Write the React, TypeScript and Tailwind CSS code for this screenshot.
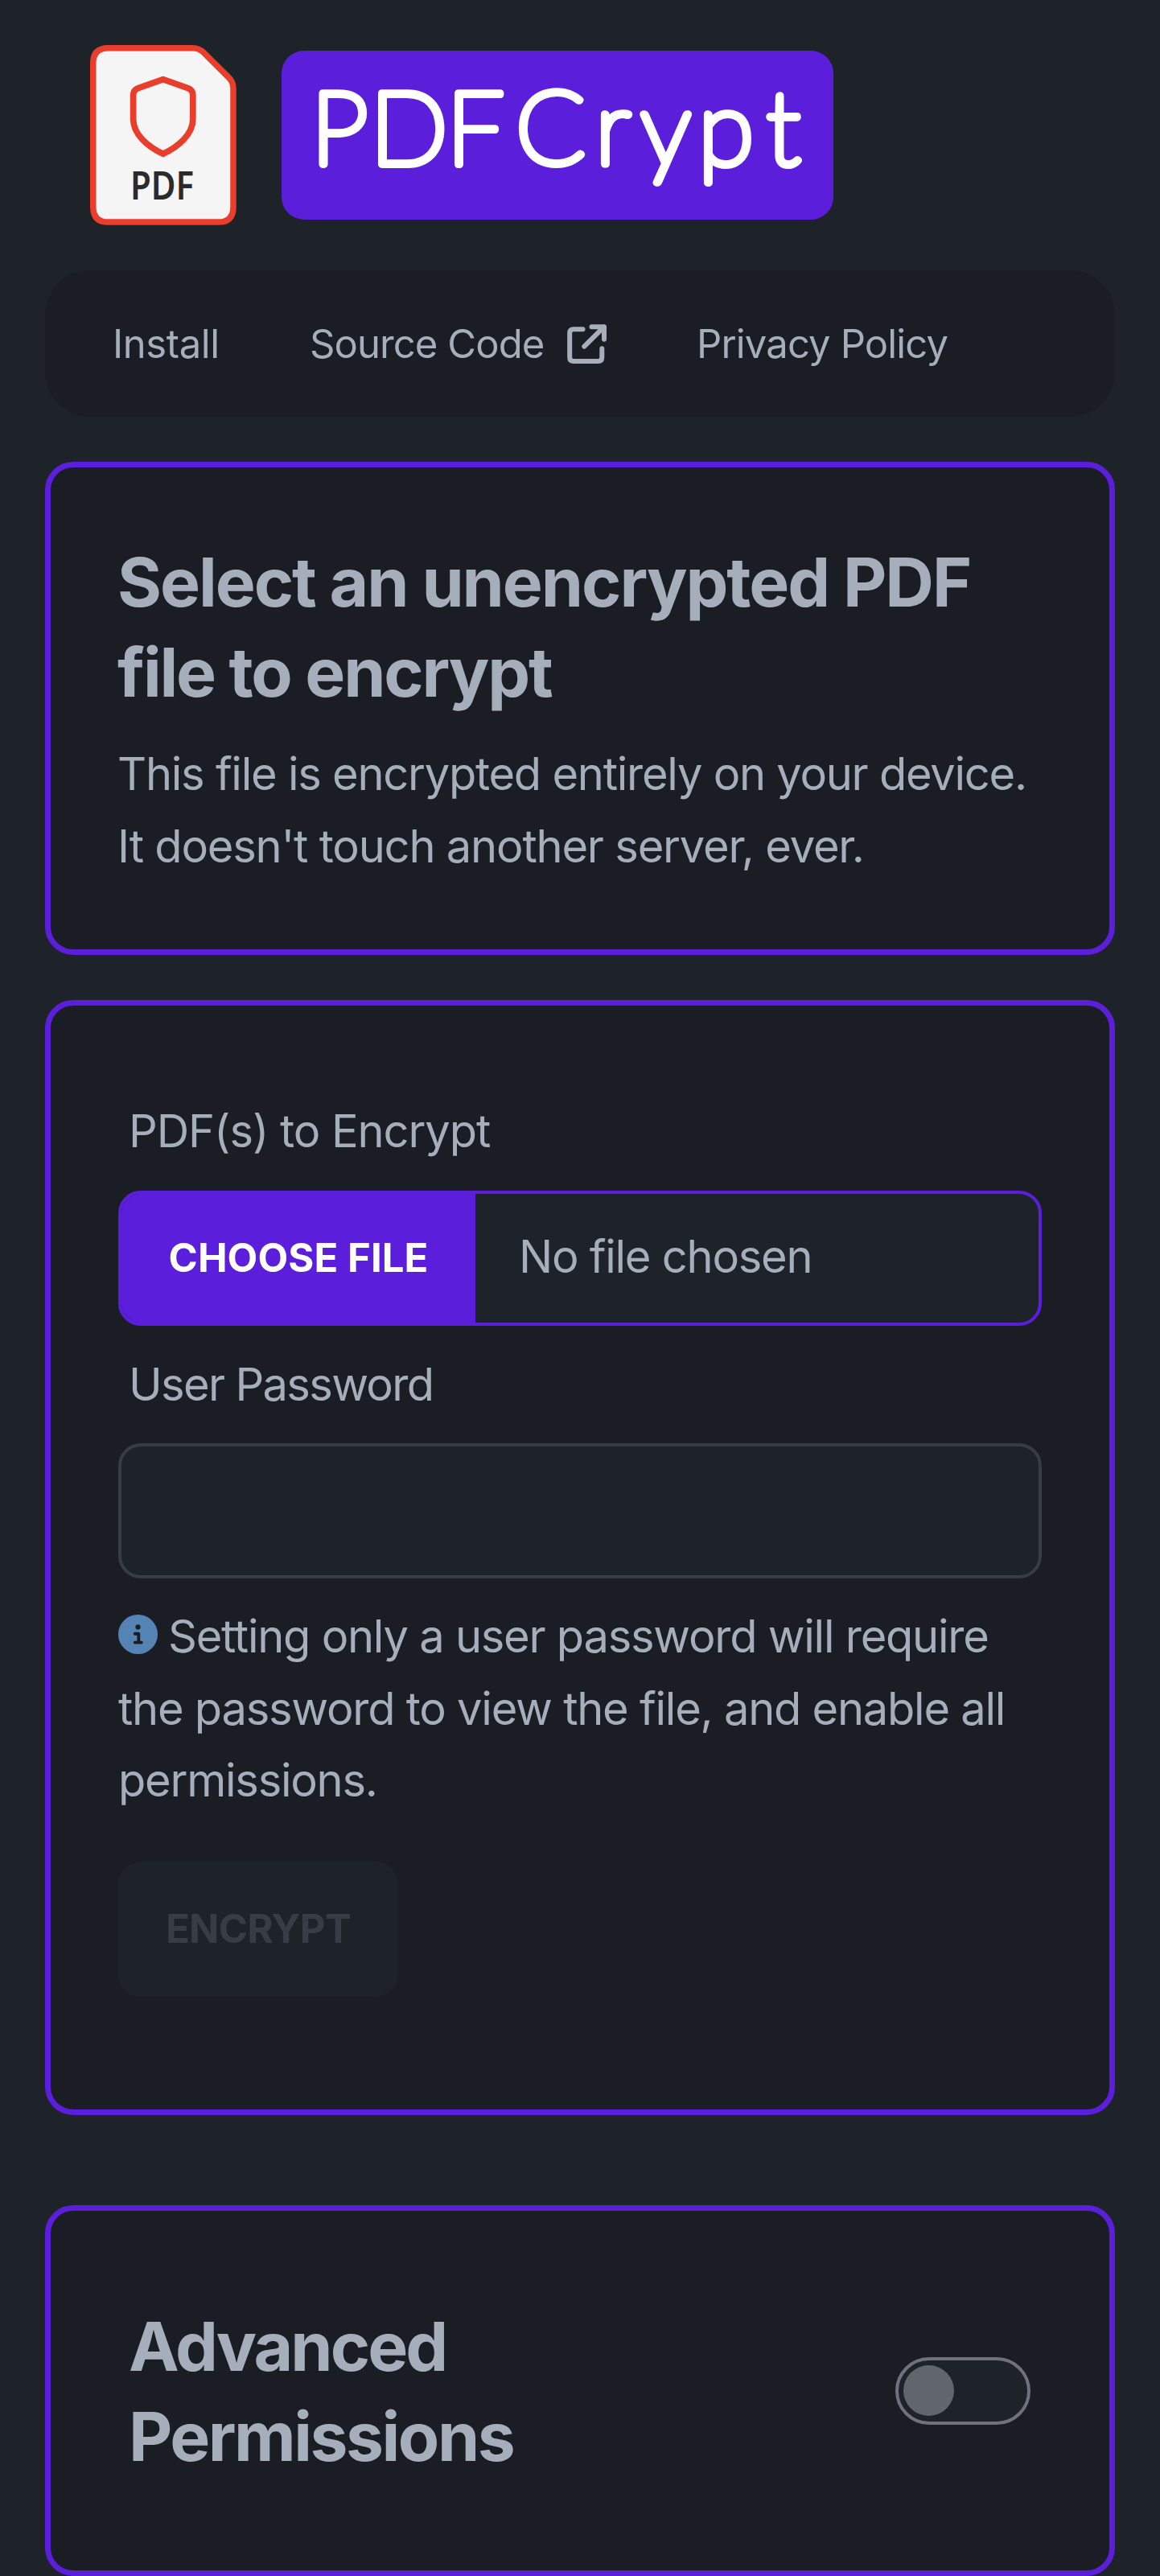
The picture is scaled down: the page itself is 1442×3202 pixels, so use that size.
import type { ReactNode } from "react";

function PdfLogo() {
  return (
    <svg
      className="h-[224px] w-[182px] shrink-0"
      viewBox="0 0 182 224"
      role="img"
      aria-label="PDF"
    >
      <path
        d="M22.5 3.75H127.5Q135.5 3.75 141 9.2L172.5 40.5Q178 46 178 54V201.2Q178 220.1 159.5 220.1H22.5Q3.75 220.1 3.75 201.2V22.5Q3.75 3.75 22.5 3.75Z"
        fill="#f5f5f5"
        stroke="#e93e2b"
        strokeWidth="7.5"
      />
      <path
        d="M90.7 42.7L121.8 53.6Q127.8 56 127.8 62.5V92C127.8 111 110 126 90.7 135.2C71.5 126 53.6 111 53.6 92V62.5Q53.6 56 59.6 53.6Z"
        fill="none"
        stroke="#e93e2b"
        strokeWidth="7.7"
        strokeLinejoin="round"
      />
      <text
        x="50"
        y="191.5"
        textLength="79"
        lengthAdjust="spacingAndGlyphs"
        fill="#2b2b2b"
        className="font-['Noto_Sans',sans-serif] text-[48px] font-semibold"
      >
        PDF
      </text>
    </svg>
  );
}

function Wordmark() {
  return (
    <div className="h-[210px] w-[686px] rounded-[28px] bg-[#5b1edb]">
      <svg className="h-full w-full" viewBox="350 63 686 210">
        <text
          x="386.5 460 555 641 740 796.5 868 953"
          y="203.5"
          fill="#ffffff"
          stroke="#ffffff"
          strokeWidth="9.5"
          strokeLinejoin="round"
          strokeLinecap="round"
          className="font-[Lato,sans-serif] text-[127px] font-thin"
        >
          PDFCrypt
        </text>
      </svg>
    </div>
  );
}

function ExternalIcon() {
  return (
    <svg
      className="h-[49px] w-[50px] shrink-0"
      viewBox="0 0 50 49"
      fill="none"
      stroke="currentColor"
      strokeWidth="6"
      strokeLinecap="round"
      strokeLinejoin="round"
    >
      <path d="M19.5 6.3H8Q3.2 6.3 3.2 11.1V41.2Q3.2 46 8 46H38.5Q43.3 46 43.3 41.2V30.3" />
      <path d="M21.3 27.7L45.7 3.3M30.5 3.3H46V18.8" />
    </svg>
  );
}

function InfoIcon() {
  return (
    <svg className="mr-[13px] inline size-[49px] align-[-2px]" viewBox="0 0 49 49">
      <circle cx="24.5" cy="24.5" r="24.5" fill="#5583b4" />
      <circle cx="24.5" cy="15.4" r="3.1" fill="#1a1d24" />
      <path
        d="M20.7 23.7H25.3V34.6M20.7 34.6H28.8"
        fill="none"
        stroke="#1a1d24"
        strokeWidth="3.9"
        strokeLinecap="round"
        strokeLinejoin="round"
      />
    </svg>
  );
}

function Card({ className, children }: { className: string; children: ReactNode }) {
  return (
    <section
      className={`rounded-[35px] border-[7px] border-[#5b1edb] bg-[#1a1d24] ${className}`}
    >
      {children}
    </section>
  );
}

export default function App() {
  return (
    <div className="min-h-[3202px] w-full overflow-hidden bg-[#1e2329] px-[56px] font-[Inter,sans-serif] text-[56px] leading-[89.6px] font-[430] text-[#a6adbb]">
      <header className="flex h-[336px] items-center gap-[56px] pl-[56px]">
        <PdfLogo />
        <Wordmark />
      </header>

      <nav className="flex h-[182px] items-center gap-[112px] rounded-[56px] bg-[#1a1d24] pt-[1px] pl-[84px] text-[49px] whitespace-nowrap">
        <a className="w-[133px] tracking-[-0.4px]">Install</a>
        <a className="flex w-[370px] items-center justify-between tracking-[-0.92px]">
          Source Code
          <ExternalIcon />
        </a>
        <a className="-ml-[1px] tracking-[-0.86px]">Privacy Policy</a>
      </nav>

      <Card className="mt-[56px] h-[613px] px-[83px] pt-[87px] whitespace-nowrap">
        <h2 className="text-[84px] leading-[112px] font-bold tracking-[-2.05px]">
          Select an unencrypted PDF
          <br />
          <span className="tracking-[-2.2px]">file to encrypt</span>
        </h2>
        <p className="mt-[26px] tracking-[-1.25px]">
          This file is encrypted entirely on your device.
          <br />
          <span className="tracking-[-1.2px]">It doesn't touch another server, ever.</span>
        </p>
      </Card>

      <Card className="mt-[56px] h-[1386px] px-[84px] pt-[116px]">
        <label className="block pl-[13px] leading-[80px] tracking-[-1.06px]">
          PDF(s) to Encrypt
        </label>
        <div className="mt-[34px] flex h-[168px] items-center overflow-hidden rounded-[28px] border-[4px] border-[#5b1edb] bg-[#1e2329]">
          <button className="h-full w-[440px] bg-[#5b1edb] text-[49px] font-bold tracking-[0.1px] text-white">
            CHOOSE FILE
          </button>
          <span className="-mt-[2px] pl-[54px] tracking-[-1.25px]">No file chosen</span>
        </div>
        <label className="mt-[33px] block pl-[13px] leading-[80px] tracking-[-1.65px]">
          User Password
        </label>
        <input
          type="password"
          className="mt-[33px] block h-[168px] w-full rounded-[28px] border-[4px] border-[#373c45] bg-[#1e2329]"
        />
        <p className="mt-[28px] tracking-[-1.24px] whitespace-nowrap">
          <InfoIcon />
          Setting only a user password will require
          <br />
          the password to view the file, and enable all
          <br />
          permissions.
        </p>
        <button
          disabled
          className="mt-[55px] block h-[168px] w-[348px] rounded-[28px] bg-[#1e2329] text-[49px] font-bold tracking-[-0.6px] text-[#373c45]"
        >
          ENCRYPT
        </button>
      </Card>

      <Card className="mt-[112px] flex h-[461px] items-center justify-between px-[91px]">
        <h2 className="pt-[2px] pl-[6px] text-[84px] leading-[112px] font-bold tracking-[-2.5px]">
          <span className="tracking-[-2.9px]">Advanced</span>
          <br />
          Permissions
        </h2>
        <div className="mr-[7px] flex h-[84px] w-[168px] items-center rounded-full border-[4px] border-[#6f727c] bg-[#1e2329] pl-[6px]">
          <div className="size-[63px] rounded-full bg-[#61656c]" />
        </div>
      </Card>
    </div>
  );
}
